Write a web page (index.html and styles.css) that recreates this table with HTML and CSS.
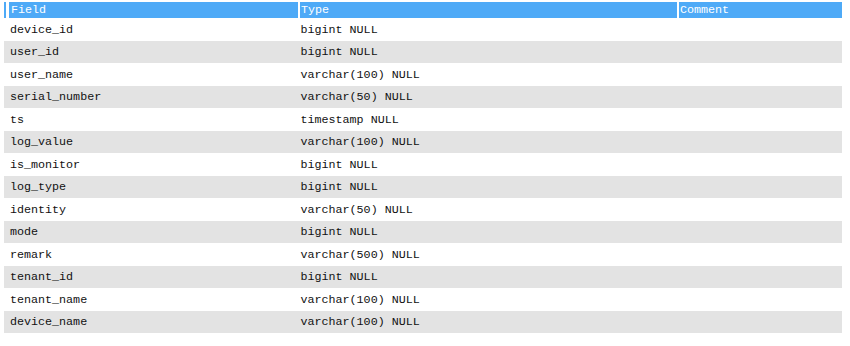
FILE: index.html
```html
<!DOCTYPE html>
<html>
<head>
<meta charset="utf-8">
<link rel="stylesheet" href="styles.css">
</head>
<body>
<div class="tbl">
  <div class="head">
    <div class="hcell strip"></div>
    <div class="hcell hfield">Field</div>
    <div class="hcell htype">Type</div>
    <div class="hcell hcomment">Comment</div>
  </div>
  <div class="row"><div class="c f">device_id</div><div class="c t">bigint NULL</div><div class="c m"></div></div>
  <div class="row alt"><div class="c f">user_id</div><div class="c t">bigint NULL</div><div class="c m"></div></div>
  <div class="row"><div class="c f">user_name</div><div class="c t">varchar(100) NULL</div><div class="c m"></div></div>
  <div class="row alt"><div class="c f">serial_number</div><div class="c t">varchar(50) NULL</div><div class="c m"></div></div>
  <div class="row"><div class="c f">ts</div><div class="c t">timestamp NULL</div><div class="c m"></div></div>
  <div class="row alt"><div class="c f">log_value</div><div class="c t">varchar(100) NULL</div><div class="c m"></div></div>
  <div class="row"><div class="c f">is_monitor</div><div class="c t">bigint NULL</div><div class="c m"></div></div>
  <div class="row alt"><div class="c f">log_type</div><div class="c t">bigint NULL</div><div class="c m"></div></div>
  <div class="row"><div class="c f">identity</div><div class="c t">varchar(50) NULL</div><div class="c m"></div></div>
  <div class="row alt"><div class="c f">mode</div><div class="c t">bigint NULL</div><div class="c m"></div></div>
  <div class="row"><div class="c f">remark</div><div class="c t">varchar(500) NULL</div><div class="c m"></div></div>
  <div class="row alt"><div class="c f">tenant_id</div><div class="c t">bigint NULL</div><div class="c m"></div></div>
  <div class="row"><div class="c f">tenant_name</div><div class="c t">varchar(100) NULL</div><div class="c m"></div></div>
  <div class="row alt"><div class="c f">device_name</div><div class="c t">varchar(100) NULL</div><div class="c m"></div></div>
</div>
</body>
</html>
```
FILE: styles.css
```css
html, body {
  margin: 0;
  padding: 0;
  background: #ffffff;
}
body {
  font-family: "Liberation Mono", "Courier New", monospace;
  font-size: 11.7px;
  color: #111111;
}
.tbl {
  padding: 2px 0 0 4px;
  width: 838px;
}
.head {
  display: flex;
  height: 16px;
}
.hcell {
  background: #4eaaf7;
  color: #ffffff;
  line-height: 16px;
  padding-left: 1px;
  box-sizing: border-box;
  white-space: nowrap;
}
.strip {
  width: 2px;
  padding: 0;
  margin-right: 3px;
}
.hfield {
  width: 289px;
  padding-left: 2px;
  margin-right: 2px;
}
.htype {
  width: 377px;
  margin-right: 2px;
}
.hcomment {
  width: 163px;
}
.row {
  display: grid;
  grid-template-columns: 296px 379px 163px;
  height: 22.5px;
  align-items: center;
  padding-top: 1px;
  box-sizing: border-box;
}
.alt {
  background: #e3e3e3;
}
.c {
  white-space: nowrap;
}
.f {
  padding-left: 6px;
}
.t {
  padding-left: 0.5px;
}
```
